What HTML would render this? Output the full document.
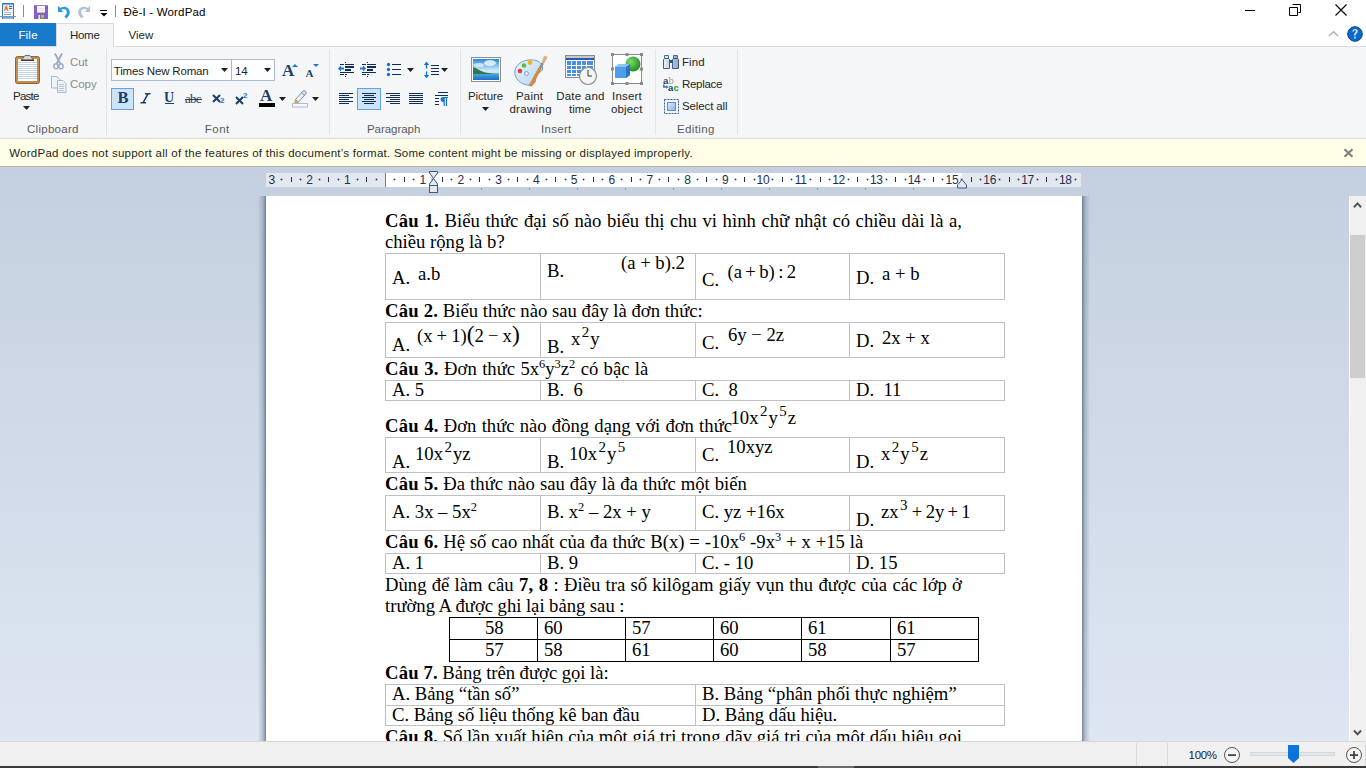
<!DOCTYPE html>
<html><head><meta charset="utf-8">
<style>
*{margin:0;padding:0;box-sizing:border-box}
html,body{width:1366px;height:768px;overflow:hidden;background:#fff;font-family:"Liberation Sans",sans-serif;font-size:12px;color:#000}
.a{position:absolute;white-space:nowrap}
#titlebar{position:absolute;left:0;top:0;width:1366px;height:23px;background:#fff}
#tabs{position:absolute;left:0;top:23px;width:1366px;height:24px;background:#fff;border-bottom:1px solid #dadbdc}
#ribbon{position:absolute;left:0;top:47px;width:1366px;height:92px;background:#f5f6f7;border-bottom:1px solid #dadbdc}
#notif{position:absolute;left:0;top:139px;width:1366px;height:28px;background:#fffee6;border-bottom:1px solid #b4b4b4}
#docarea{position:absolute;left:0;top:167px;width:1366px;height:574px;background:linear-gradient(#c4cfdf,#dee6f2)}
#page{position:absolute;left:266px;top:196px;width:816px;height:545px;background:#fff}
#vscroll{position:absolute;left:1349px;top:196px;width:17px;height:545px;background:#f0f0f0;border-left:1px solid #fff}
#rulertop{position:absolute;left:1349px;top:166px;width:17px;height:30px;background:#c4cfdf}
#status{position:absolute;left:0;top:741px;width:1366px;height:25px;background:#f0f0f0;border-top:1px solid #d7d7d7}
#taskbar{position:absolute;left:0;top:766px;width:1366px;height:2px;background:#3a3a3a}
.sep{position:absolute;width:1px;background:#e2e3e4}
.glabel{position:absolute;top:123px;color:#5b5b5b;font-size:11.5px}
.doc{font-family:"Liberation Serif",serif;font-size:18.67px;color:#000}
.t{position:absolute;border:1px solid #c0c0c0}
.v{position:absolute;width:1px;background:#c0c0c0}
.h{position:absolute;height:1px;background:#c0c0c0}
.bk{background:#000}

.doc b{letter-spacing:0.2px}
.eq sup{font-size:15px !important;top:-8px !important;margin:0 1px 0 1.5px}
.doc sup{font-size:12.4px;vertical-align:0;position:relative;top:-7px}
#page{overflow:hidden}
.rn{top:173px;width:20px;text-align:center;font-size:12px;line-height:15px;color:#1e3050;letter-spacing:-0.3px}
</style></head><body>
<div id="titlebar"></div>
<div id="tabs"></div>
<div id="ribbon"></div>
<div id="notif"></div>
<div id="docarea"></div>


<!-- ===== RIBBON ===== -->
<div class="sep" style="left:106px;top:49px;height:86px"></div>
<div class="sep" style="left:329px;top:49px;height:86px"></div>
<div class="sep" style="left:460px;top:49px;height:86px"></div>
<div class="sep" style="left:655px;top:49px;height:86px"></div>
<div class="sep" style="left:737px;top:49px;height:86px"></div>
<div class="glabel" style="left:27.00px;letter-spacing:0.275px">Clipboard</div>
<div class="glabel" style="left:204.80px;letter-spacing:0.467px">Font</div>
<div class="glabel" style="left:367.00px;letter-spacing:-0.050px">Paragraph</div>
<div class="glabel" style="left:541.00px;letter-spacing:0.300px">Insert</div>
<div class="glabel" style="left:677.00px;letter-spacing:0.367px">Editing</div>
<!-- clipboard -->
<svg class="a" style="left:14px;top:53px" width="27" height="32" viewBox="0 0 27 32">
 <rect x="1.5" y="3.5" width="24" height="27" rx="2" fill="#c08d4d" stroke="#8f6531"/>
 <rect x="4" y="6" width="19" height="22" fill="#fff"/>
 <g fill="#c3d3e3"><rect x="4" y="9" width="19" height="1"/><rect x="4" y="11" width="19" height="1"/><rect x="4" y="13" width="19" height="1"/><rect x="4" y="15" width="19" height="1"/><rect x="4" y="17" width="19" height="1"/><rect x="4" y="19" width="19" height="1"/><rect x="4" y="21" width="19" height="1"/><rect x="4" y="23" width="19" height="1"/><rect x="4" y="25" width="19" height="1"/></g>
 <path d="M7 7.5l4-5h5l4 5z" fill="#d8d8d8" stroke="#555" stroke-width="0.8"/>
 <rect x="7" y="6.5" width="13" height="1.5" fill="#3a3a3a"/>
</svg>
<div class="a" style="left:13.00px;top:89px;font-size:11.5px;line-height:15px;color:#262626;letter-spacing:-0.750px">Paste</div>
<svg class="a" style="left:23px;top:106px" width="7" height="4"><path d="M0 0h7L3.5 4z" fill="#262626"/></svg>
<svg class="a" style="left:53px;top:53px" width="11" height="17" viewBox="0 0 11 17">
 <path d="M2 0.5l5.2 10M9 0.5l-5.2 10" stroke="#9aabc3" stroke-width="1.9"/>
 <ellipse cx="3" cy="13.3" rx="2.1" ry="2.6" fill="none" stroke="#9aabc3" stroke-width="1.4"/>
 <ellipse cx="8" cy="13.3" rx="2.1" ry="2.6" fill="none" stroke="#9aabc3" stroke-width="1.4"/>
</svg>
<div class="a" style="left:70.00px;top:55px;font-size:11.5px;line-height:15px;color:#8b8b8b;letter-spacing:-0.100px">Cut</div>
<svg class="a" style="left:51px;top:76px" width="17" height="17" viewBox="0 0 17 17">
 <path d="M0.5 0.5h5.5l3 3v8.5h-8.5z" fill="#eef3f9" stroke="#a8b8cf"/>
 <path d="M6.5 4.5h5.5l3 3v9h-8.5z" fill="#eef3f9" stroke="#a8b8cf"/>
 <g fill="#a8b8cf"><rect x="8" y="8" width="5" height="0.8"/><rect x="8" y="10" width="5" height="0.8"/><rect x="8" y="12" width="5" height="0.8"/><rect x="8" y="14" width="5" height="0.8"/></g>
</svg>
<div class="a" style="left:70.00px;top:77px;font-size:11.5px;line-height:15px;color:#8b8b8b;letter-spacing:-0.067px">Copy</div>
<!-- font -->
<div class="a" style="left:111px;top:59px;width:121px;height:22px;background:#fdfeff;border:1px solid #a8bbd6"></div>
<div class="a" style="left:231px;top:59px;width:44px;height:22px;background:#fdfeff;border:1px solid #a8bbd6"></div>
<div class="a" style="left:113.80px;top:64px;font-size:11.5px;line-height:15px;color:#1e1e1e;letter-spacing:-0.178px">Times New Roman</div>
<svg class="a" style="left:221px;top:68px" width="7" height="4"><path d="M0 0h7L3.5 4z" fill="#1e1e1e"/></svg>
<div class="a" style="left:235px;top:64px;font-size:11.5px;line-height:15px;color:#1e1e1e;letter-spacing:-0.2px">14</div>
<svg class="a" style="left:264px;top:68px" width="7" height="4"><path d="M0 0h7L3.5 4z" fill="#1e1e1e"/></svg>
<div class="a" style="left:282px;top:61px;font-family:'Liberation Serif';font-weight:bold;font-size:17px;line-height:19px;color:#1e3f66">A</div>
<svg class="a" style="left:292px;top:63.5px" width="6" height="3"><path d="M0 3h6L3 0z" fill="#1a73d9"/></svg>
<div class="a" style="left:305.5px;top:67px;font-family:'Liberation Serif';font-weight:bold;font-size:11px;line-height:12px;color:#1e3f66">A</div>
<svg class="a" style="left:313px;top:64px" width="6" height="3"><path d="M0 0h6L3 3z" fill="#1a73d9"/></svg>
<div class="a" style="left:111px;top:88px;width:23px;height:22px;background:#cce4f7;border:1px solid #62a2e4"></div>
<div class="a" style="left:117.5px;top:89px;font-family:'Liberation Serif';font-weight:bold;font-size:16.5px;line-height:17px;color:#1e3f66">B</div>
<svg class="a" style="left:140px;top:93px" width="11" height="11" viewBox="0 0 11 11"><path d="M5 0.8h5.5M0.5 9.8h5.5M8 0.8L3 9.8" stroke="#1e3f66" stroke-width="1.5" fill="none"/></svg>
<div class="a" style="left:164px;top:90px;font-family:'Liberation Serif';font-weight:bold;font-size:14px;line-height:16px;color:#1e3f66">U</div>
<div class="a" style="left:165px;top:103px;width:9px;height:1px;background:#1e3f66"></div>
<div class="a" style="left:185px;top:91px;font-family:'Liberation Serif';font-size:13px;line-height:15px;color:#1e3f66;letter-spacing:-0.8px">abc</div>
<div class="a" style="left:185px;top:99px;width:17px;height:1px;background:#1e3f66"></div>
<svg class="a" style="left:212px;top:94px" width="9" height="9" viewBox="0 0 9 9"><path d="M1 1l7 7M8 1L1 8" stroke="#1e3f66" stroke-width="2.1"/></svg>
<div class="a" style="left:220px;top:96.5px;font-weight:bold;font-size:8px;line-height:8px;color:#1a73d9">2</div>
<svg class="a" style="left:235px;top:96px" width="9" height="9" viewBox="0 0 9 9"><path d="M1 1l7 7M8 1L1 8" stroke="#1e3f66" stroke-width="2.1"/></svg>
<div class="a" style="left:243px;top:91.5px;font-weight:bold;font-size:8px;line-height:8px;color:#1a73d9">2</div>
<div class="a" style="left:260px;top:86px;font-family:'Liberation Serif';font-weight:bold;font-size:17px;line-height:19px;color:#1e3f66">A</div>
<div class="a" style="left:259px;top:103px;width:16px;height:4px;background:#000"></div>
<svg class="a" style="left:279px;top:97px" width="7" height="4"><path d="M0 0h7L3.5 4z" fill="#1e1e1e"/></svg>
<svg class="a" style="left:292px;top:89px" width="17" height="19" viewBox="0 0 17 19">
 <defs><linearGradient id="hlg" x1="0" y1="0" x2="1" y2="0"><stop offset="0" stop-color="#ffffff"/><stop offset="1" stop-color="#c9d6ea"/></linearGradient></defs>
 <path d="M3.5 10.5L10.8 2.2a2 2 0 0 1 3 2.6L6.5 13.2z" fill="url(#hlg)" stroke="#7386a8" stroke-width="0.9"/>
 <path d="M9.5 3.7l3 2.6" stroke="#7386a8" stroke-width="0.8"/>
 <path d="M3.5 10.5l3 2.7-4.2 1.3z" fill="#e9b43c" stroke="#9c7a2a" stroke-width="0.5"/>
 <rect x="0.5" y="14.5" width="15" height="3.5" fill="#f7f9fc" stroke="#a9bbd8"/>
</svg>
<svg class="a" style="left:312px;top:97px" width="7" height="4"><path d="M0 0h7L3.5 4z" fill="#1e1e1e"/></svg>

<!-- paragraph -->
<svg class="a" style="left:338px;top:62px" width="17" height="17" viewBox="0 0 17 17">
 <g fill="#0f2d57"><rect x="2" y="2" width="4" height="1"/><rect x="7" y="2" width="9" height="1"/><rect x="7" y="4" width="9" height="2"/><rect x="7" y="7" width="6" height="2"/><rect x="2" y="10" width="14" height="1"/><rect x="2" y="12" width="4" height="1"/><rect x="7" y="12" width="2" height="1"/></g>
 <g fill="#0f2d57"><rect x="7" y="0" width="1" height="1"/><rect x="7" y="14" width="1" height="1"/></g>
 <path d="M0 6.5l3-3v2h3v2h-3v2z" fill="#1a73d9"/>
</svg>
<svg class="a" style="left:360px;top:62px" width="17" height="17" viewBox="0 0 17 17">
 <g fill="#0f2d57"><rect x="2" y="2" width="4" height="1"/><rect x="7" y="2" width="9" height="1"/><rect x="7" y="4" width="9" height="2"/><rect x="7" y="7" width="6" height="2"/><rect x="2" y="10" width="14" height="1"/><rect x="2" y="12" width="4" height="1"/><rect x="7" y="12" width="2" height="1"/></g>
 <g fill="#0f2d57"><rect x="7" y="0" width="1" height="1"/><rect x="7" y="14" width="1" height="1"/></g>
 <path d="M6 6.5l-3-3v2h-3v2h3v2z" fill="#1a73d9"/>
</svg>
<svg class="a" style="left:386px;top:62px" width="16" height="15" viewBox="0 0 16 15">
 <g fill="#1a73d9"><circle cx="2.5" cy="2.5" r="1.7"/><circle cx="2.5" cy="7.5" r="1.7"/><circle cx="2.5" cy="12.5" r="1.7"/></g>
 <g fill="#0f2d57"><rect x="6" y="2" width="9" height="1"/><rect x="6" y="7" width="9" height="1"/><rect x="6" y="12" width="9" height="1"/></g>
</svg>
<svg class="a" style="left:407px;top:68px" width="7" height="4"><path d="M0 0h7L3.5 4z" fill="#1e1e1e"/></svg>
<svg class="a" style="left:423px;top:61px" width="17" height="18" viewBox="0 0 17 18">
 <path d="M3.5 0.5L0.8 4h2v3.5h1.4V4h2z M3.5 17.5L0.8 14h2v-3.5h1.4V14h2z" fill="#1a73d9"/>
 <g fill="#0f2d57"><rect x="8" y="4" width="8" height="1"/><rect x="8" y="7" width="8" height="1"/><rect x="8" y="10" width="8" height="1"/><rect x="8" y="13" width="8" height="1"/></g>
</svg>
<svg class="a" style="left:441px;top:68px" width="7" height="4"><path d="M0 0h7L3.5 4z" fill="#1e1e1e"/></svg>
<svg class="a" style="left:339px;top:93px" width="14" height="11" viewBox="0 0 14 11"><g fill="#0f2d57"><rect x="0" y="0" width="14" height="1"/><rect x="0" y="2" width="10" height="1"/><rect x="0" y="4" width="14" height="1"/><rect x="0" y="6" width="10" height="1"/><rect x="0" y="8" width="14" height="1"/><rect x="0" y="10" width="10" height="1"/></g></svg>
<div class="a" style="left:357px;top:88px;width:24px;height:22px;background:#cce4f7;border:1px solid #62a2e4"></div>
<svg class="a" style="left:362px;top:93px" width="14" height="11" viewBox="0 0 14 11"><g fill="#0f2d57"><rect x="0" y="0" width="14" height="1"/><rect x="2" y="2" width="10" height="1"/><rect x="0" y="4" width="14" height="1"/><rect x="2" y="6" width="10" height="1"/><rect x="0" y="8" width="14" height="1"/><rect x="2" y="10" width="10" height="1"/></g></svg>
<svg class="a" style="left:386px;top:93px" width="14" height="11" viewBox="0 0 14 11"><g fill="#0f2d57"><rect x="0" y="0" width="14" height="1"/><rect x="4" y="2" width="10" height="1"/><rect x="0" y="4" width="14" height="1"/><rect x="4" y="6" width="10" height="1"/><rect x="0" y="8" width="14" height="1"/><rect x="4" y="10" width="10" height="1"/></g></svg>
<svg class="a" style="left:409px;top:93px" width="14" height="11" viewBox="0 0 14 11"><g fill="#0f2d57"><rect x="0" y="0" width="14" height="1"/><rect x="0" y="2" width="14" height="1"/><rect x="0" y="4" width="14" height="1"/><rect x="0" y="6" width="14" height="1"/><rect x="0" y="8" width="14" height="1"/><rect x="0" y="10" width="14" height="1"/></g></svg>
<svg class="a" style="left:434px;top:92px" width="16" height="15" viewBox="0 0 16 15">
 <g fill="#0f2d57"><rect x="4" y="0" width="10" height="1"/><rect x="1" y="3" width="13" height="1"/><rect x="1" y="6" width="4" height="1"/><rect x="1" y="9" width="4" height="1"/><rect x="1" y="12" width="4" height="1"/></g>
 <path d="M8.5 5h5.5v1h-1v8h-1.2V6h-1v8H9.6V9.8a2.4 2.4 0 0 1-1.1-4.8z" fill="#1a73d9"/>
</svg>
<!-- insert -->
<svg class="a" style="left:471px;top:57px" width="31" height="26" viewBox="0 0 31 26">
 <defs><linearGradient id="sky" x1="0" y1="0" x2="0" y2="1"><stop offset="0" stop-color="#2d86d8"/><stop offset="0.55" stop-color="#cfe9f8"/><stop offset="1" stop-color="#b9def3"/></linearGradient>
 <linearGradient id="wat" x1="0" y1="0" x2="0" y2="1"><stop offset="0" stop-color="#4aa3e0"/><stop offset="1" stop-color="#1d6fc2"/></linearGradient></defs>
 <rect x="0.5" y="0.5" width="29" height="24" fill="#fff" stroke="#8f8f8f"/>
 <rect x="2" y="2" width="26" height="21" fill="url(#sky)"/>
 <ellipse cx="19" cy="6" rx="6" ry="3" fill="#eaf6fd" opacity="0.85"/><ellipse cx="8" cy="8" rx="5" ry="2" fill="#eaf6fd" opacity="0.7"/>
 <path d="M2 10.5c3 0 5 2 8 3.5 4 2 10 2.5 18 2.5V18H2z" fill="#2f7a4a"/>
 <rect x="2" y="17" width="26" height="6" fill="url(#wat)"/>
</svg>
<div class="a" style="left:468.00px;top:89px;font-size:11.5px;line-height:15px;color:#262626;letter-spacing:-0.117px">Picture</div>
<svg class="a" style="left:482px;top:107px" width="7" height="4"><path d="M0 0h7L3.5 4z" fill="#1e1e1e"/></svg>
<svg class="a" style="left:513px;top:54px" width="35" height="33" viewBox="0 0 35 33">
 <defs><linearGradient id="palg" x1="0" y1="0" x2="1" y2="1"><stop offset="0" stop-color="#e8f3fc"/><stop offset="1" stop-color="#b6d5ee"/></linearGradient></defs>
 <path d="M2.5 22c-3-7 3-15 13-16 9-1 15 3 14 9-1 4-5 3-7 6-2 4 2 6-2 9-5 3-15 0-18-8z" fill="url(#palg)" stroke="#5f9cc9" stroke-width="0.9"/>
 <circle cx="7" cy="17" r="2.3" fill="#e33b3b"/><circle cx="11" cy="11.5" r="2.3" fill="#5cbf3f"/><circle cx="17" cy="8.5" r="2.4" fill="#f4b321"/>
 <circle cx="13.5" cy="19.5" r="1.9" fill="#fff" stroke="#5f9cc9" stroke-width="1"/>
 <path d="M16.2 31.5L26 13.5l2.2 1.1-9.4 17.6z" fill="#e98a2a" stroke="#b8621a" stroke-width="0.5"/>
 <path d="M26 13.5l2.6-5 2.3 1.2-2.7 4.9z" fill="#8c8c8c"/>
 <path d="M28.6 8.5l2.5-6.5c1.2-.6 2.8.4 3.4 1.4l-3.6 6.3z" fill="#d7b07a"/>
</svg>
<div class="a" style="left:516.00px;top:89px;font-size:11.5px;line-height:15px;color:#262626;letter-spacing:0.200px">Paint</div>
<div class="a" style="left:509.40px;top:102px;font-size:11.5px;line-height:15px;color:#262626;letter-spacing:0.317px">drawing</div>
<svg class="a" style="left:564px;top:54px" width="34" height="32" viewBox="0 0 34 32">
 <rect x="1.5" y="1.5" width="29" height="22" fill="#fff" stroke="#8a8a8a"/>
 <rect x="2" y="2" width="28" height="3" fill="#c8c8c8"/>
 <rect x="2" y="4" width="28" height="2" fill="#2a5ba8"/>
 <g fill="#4a90e2"><rect x="3" y="7" width="26" height="15"/></g>
 <g fill="#fff"><rect x="7" y="7" width="1" height="15"/><rect x="12" y="7" width="1" height="15"/><rect x="17" y="7" width="1" height="15"/><rect x="22" y="7" width="1" height="15"/><rect x="3" y="11" width="26" height="1"/><rect x="3" y="15" width="26" height="1"/><rect x="3" y="19" width="26" height="1"/></g>
 <circle cx="24" cy="22" r="8.5" fill="#f4f4f4" stroke="#8d8d8d" stroke-width="1.2"/>
 <path d="M24 16v6h4" fill="none" stroke="#333" stroke-width="1"/>
</svg>
<div class="a" style="left:556.20px;top:89px;font-size:11.5px;line-height:15px;color:#262626;letter-spacing:0.228px">Date and</div>
<div class="a" style="left:569.00px;top:102px;font-size:11.5px;line-height:15px;color:#262626;letter-spacing:0.017px">time</div>
<svg class="a" style="left:611px;top:53px" width="33" height="33" viewBox="0 0 33 33">
 <rect x="1.5" y="1.5" width="29" height="29" fill="#fff" stroke="#8a8a8a"/>
 <g fill="#8a8a8a"><rect x="0" y="0" width="3" height="3"/><rect x="14.5" y="0" width="3" height="3"/><rect x="29" y="0" width="3" height="3"/><rect x="0" y="14.5" width="3" height="3"/><rect x="29" y="14.5" width="3" height="3"/><rect x="0" y="29" width="3" height="3"/><rect x="14.5" y="29" width="3" height="3"/><rect x="29" y="29" width="3" height="3"/></g>
 <defs><radialGradient id="gsph" cx="0.35" cy="0.35" r="0.7"><stop offset="0" stop-color="#7fdc6a"/><stop offset="1" stop-color="#1f8a24"/></radialGradient></defs>
 <circle cx="22" cy="11" r="7.5" fill="url(#gsph)"/>
 <path d="M4 14l4-3h11v11l-4 3H4z" fill="#4f9ce8"/>
 <path d="M4 14l4-3h11l-4 3z" fill="#8cc2f5"/><path d="M15 14l4-3v11l-4 3z" fill="#2f74c4"/>
</svg>
<div class="a" style="left:612.00px;top:89px;font-size:11.5px;line-height:15px;color:#262626;letter-spacing:0.200px">Insert</div>
<div class="a" style="left:611.00px;top:102px;font-size:11.5px;line-height:15px;color:#262626;letter-spacing:0.150px">object</div>
<!-- editing -->
<svg class="a" style="left:663px;top:55px" width="16" height="14" viewBox="0 0 16 14">
 <defs><linearGradient id="bing" x1="0" y1="0" x2="1" y2="0"><stop offset="0" stop-color="#e9f0f8"/><stop offset="1" stop-color="#8fa7c6"/></linearGradient></defs>
 <path d="M1.5 0.5h4v3h-4z M10.5 0.5h4v3h-4z" fill="url(#bing)" stroke="#3f5f8c" stroke-width="0.9"/>
 <path d="M0.5 4.5l1-1h4l1 1v9h-6z M9.5 4.5l1-1h4l1 1v9h-6z" fill="url(#bing)" stroke="#2f4f7c" stroke-width="0.9"/>
 <rect x="6.5" y="5" width="3" height="3" fill="#2f4f7c"/>
</svg>
<div class="a" style="left:682px;top:55px;font-size:11.5px;line-height:15px;color:#262626;letter-spacing:0.1px">Find</div>
<svg class="a" style="left:662px;top:76px" width="19" height="15" viewBox="0 0 19 15">
 <text x="1" y="7.5" font-family="Liberation Sans" font-weight="bold" font-size="9.5" fill="#1e3f66">a</text>
 <text x="6.5" y="7.5" font-family="Liberation Serif" font-size="10.5" fill="#9a9a9a">b</text>
 <text x="6" y="14.5" font-family="Liberation Sans" font-weight="bold" font-size="9.5" fill="#1e3f66">a</text>
 <text x="11.5" y="14.5" font-family="Liberation Sans" font-weight="bold" font-size="9.5" fill="#2a9a2a">c</text>
 <path d="M1.8 8.5v2.5h3" fill="none" stroke="#1a73d9" stroke-width="1.4"/><path d="M4.3 9.2l2.3 1.8-2.3 1.8z" fill="#1a73d9"/>
</svg>
<div class="a" style="left:682.00px;top:77px;font-size:11.5px;line-height:15px;color:#262626;letter-spacing:-0.300px">Replace</div>
<svg class="a" style="left:664px;top:99px" width="15" height="15" viewBox="0 0 15 15">
 <rect x="0.5" y="0.5" width="14" height="14" fill="none" stroke="#2f5f9a" stroke-dasharray="2 1"/>
 <defs><linearGradient id="selg" x1="0" y1="0" x2="1" y2="1"><stop offset="0" stop-color="#e4f0fc"/><stop offset="1" stop-color="#7fb2e8"/></linearGradient></defs>
 <rect x="3.5" y="3.5" width="8" height="8" fill="url(#selg)" stroke="#5b8fcf"/>
</svg>
<div class="a" style="left:682.00px;top:99px;font-size:11.5px;line-height:15px;color:#262626;letter-spacing:-0.117px">Select all</div>
<!-- notification -->
<div class="a" style="left:9.20px;top:146px;font-size:11.5px;line-height:15px;color:#1e1e1e;letter-spacing:0.262px">WordPad does not support all of the features of this document’s format. Some content might be missing or displayed improperly.</div>
<svg class="a" style="left:1343px;top:148px" width="12" height="10" viewBox="0 0 12 10"><path d="M1.5 1.2l8 7.6M9.5 1.2l-8 7.6" stroke="#7d7d7d" stroke-width="2"/></svg>
<!-- title bar -->
<svg class="a" style="left:0;top:3px" width="17" height="17" viewBox="0 0 17 17">
 <defs><linearGradient id="appg" x1="0" y1="0" x2="0" y2="1"><stop offset="0" stop-color="#d2e4f6"/><stop offset="1" stop-color="#ffffff"/></linearGradient></defs>
 <rect x="2" y="0" width="12" height="14" fill="#3f77b0"/>
 <rect x="3" y="1.5" width="10" height="12" fill="url(#appg)"/>
 <path d="M4 8l1.6-5h1.3L8.5 8H7.4l-.4-1.2H5.5L5.1 8z" fill="#f27b1e"/>
 <rect x="9" y="3" width="3" height="1" fill="#3566c9"/><rect x="9" y="5" width="3" height="1" fill="#3566c9"/>
 <rect x="4" y="9" width="7" height="1" fill="#b5bfcc"/><rect x="4" y="11" width="7" height="1" fill="#8f9bac"/>
 <rect x="0" y="13" width="16" height="1" fill="#6b9acb"/>
 <rect x="2" y="14" width="12" height="2" fill="#4a82bd"/>
 <rect x="3" y="14.6" width="10" height="0.9" fill="#dbe7f3"/>
</svg>
<div class="a" style="left:23px;top:5px;width:1px;height:12px;background:#8c8c8c"></div>
<svg class="a" style="left:34px;top:5px" width="14" height="14" viewBox="0 0 14 14">
 <rect x="0" y="0" width="14" height="14" rx="0.5" fill="#8a5cc8"/>
 <rect x="0" y="0" width="14" height="1" fill="#a57de0"/>
 <rect x="3" y="1" width="8" height="6.5" fill="#fbfbfb"/>
 <rect x="4" y="3" width="6" height="0.6" fill="#c9d3e2"/><rect x="4" y="5" width="6" height="0.6" fill="#c9d3e2"/>
 <rect x="3.5" y="9.5" width="7" height="4.5" fill="#7b7b7b"/>
 <rect x="4.5" y="10" width="1.5" height="4" fill="#e8e8e8"/>
 <rect x="7" y="10" width="3" height="3" fill="#a9a9a9"/>
</svg>
<svg class="a" style="left:56px;top:4px" width="15" height="16" viewBox="0 0 15 16">
 <path d="M2 2v6h5.5l-2.3-2.1c2.6-1.8 5.6-.5 5.6 2.3 0 1.3-.7 2.4-2.5 4.2l2.1 2.1c2.3-2.2 3.4-3.9 3.4-6.3 0-4.6-5.6-7-9.4-4.1L2 2z" fill="#2b9be6"/>
</svg>
<svg class="a" style="left:77px;top:4px" width="15" height="16" viewBox="0 0 15 16">
 <path d="M13 2v6H7.5l2.3-2.1C7.2 4.1 4.2 5.4 4.2 8.2c0 1.3.7 2.4 2.5 4.2l-2.1 2.1C2.3 12.3 1.2 10.6 1.2 8.2c0-4.6 5.6-7 9.4-4.1L13 2z" fill="#b4c2d6"/>
</svg>
<div class="a" style="left:100px;top:10px;width:7px;height:1px;background:#000"></div>
<svg class="a" style="left:100px;top:13px" width="8" height="4"><path d="M0.5 0h7L4 3.5z" fill="#000"/></svg>
<div class="a" style="left:115px;top:5px;width:1px;height:12px;background:#8c8c8c"></div>
<div class="a" style="left:123.40px;top:5px;font-size:11.5px;line-height:15px;color:#000;letter-spacing:0.188px">Đề-I - WordPad</div>
<!-- window controls -->
<div class="a" style="left:1245px;top:10px;width:10px;height:1px;background:#000"></div>
<svg class="a" style="left:1289px;top:4px" width="12" height="12" viewBox="0 0 12 12"><path d="M3.5 0.5h8v8h-2M0.5 3.5h8v8h-8z" fill="none" stroke="#000"/></svg>
<svg class="a" style="left:1335px;top:4px" width="12" height="12" viewBox="0 0 12 12"><path d="M0.5 0.5l11 11M11.5 0.5l-11 11" stroke="#000" stroke-width="1.1"/></svg>
<!-- tabs -->
<div class="a" style="left:0;top:23px;width:56px;height:23px;background:#1979ca"></div>
<div class="a" style="left:18.40px;top:28px;font-size:11.5px;line-height:15px;color:#fff;letter-spacing:0.201px">File</div>
<div class="a" style="left:56px;top:23px;width:58px;height:24px;background:#f5f6f7;border:1px solid #dadbdc;border-bottom:none"></div>
<div class="a" style="left:70.00px;top:28px;font-size:11.5px;line-height:15px;color:#262626;letter-spacing:-0.299px">Home</div>
<div class="a" style="left:128.60px;top:28px;font-size:11.5px;line-height:15px;color:#262626;letter-spacing:-0.032px">View</div>
<svg class="a" style="left:1328px;top:30px" width="11" height="7" viewBox="0 0 11 7"><path d="M1 6l4.5-4.5L10 6" fill="none" stroke="#a8a8a8" stroke-width="1.2"/></svg>
<svg class="a" style="left:1346px;top:25px" width="18" height="18" viewBox="0 0 18 18"><circle cx="9" cy="9" r="7.3" fill="#0b6ad0" stroke="#0a3f85" stroke-width="1"/><path d="M6.4 6.6c0-1.7 1.2-2.6 2.7-2.6 1.6 0 2.7 1 2.7 2.3 0 1.9-2.2 2.2-2.2 3.9v.4H8v-.6c0-2 2-2.4 2-3.7 0-.6-.4-1-1-1-.7 0-1 .5-1.1 1.3z M8 11.8h1.7v1.7H8z" fill="#dbe9f8"/></svg>


<div class="a" style="left:258px;top:196px;width:8px;height:545px;background:linear-gradient(90deg,rgba(110,125,150,0),rgba(110,125,150,0.42) 65%,rgba(90,105,130,0.8))"></div>
<div class="a" style="left:1082px;top:196px;width:8px;height:545px;background:linear-gradient(270deg,rgba(110,125,150,0),rgba(110,125,150,0.42) 65%,rgba(90,105,130,0.8))"></div>
<div id="page"></div><div class="a" style="left:266px;top:173px;width:815px;height:14px;background:#e3e7ee"></div>
<div class="a" style="left:386px;top:173px;width:576px;height:14px;background:#fff"></div>
<div class="a" style="left:385px;top:173px;width:1px;height:14px;background:#6d7d96"></div>
<div class="a rn" style="left:261.62px">3</div>
<div class="a" style="left:281px;top:179px;width:1px;height:1px;background:#1e3050;box-shadow:0 0 0 0.3px #1e3050"></div>
<div class="a" style="left:291px;top:177px;width:1px;height:5px;background:#1e3050"></div>
<div class="a" style="left:300px;top:179px;width:1px;height:1px;background:#1e3050;box-shadow:0 0 0 0.3px #1e3050"></div>
<div class="a rn" style="left:299.41px">2</div>
<div class="a" style="left:319px;top:179px;width:1px;height:1px;background:#1e3050;box-shadow:0 0 0 0.3px #1e3050"></div>
<div class="a" style="left:328px;top:177px;width:1px;height:5px;background:#1e3050"></div>
<div class="a" style="left:338px;top:179px;width:1px;height:1px;background:#1e3050;box-shadow:0 0 0 0.3px #1e3050"></div>
<div class="a rn" style="left:337.20px">1</div>
<div class="a" style="left:357px;top:179px;width:1px;height:1px;background:#1e3050;box-shadow:0 0 0 0.3px #1e3050"></div>
<div class="a" style="left:366px;top:177px;width:1px;height:5px;background:#1e3050"></div>
<div class="a" style="left:376px;top:179px;width:1px;height:1px;background:#1e3050;box-shadow:0 0 0 0.3px #1e3050"></div>
<div class="a" style="left:394px;top:179px;width:1px;height:1px;background:#1e3050;box-shadow:0 0 0 0.3px #1e3050"></div>
<div class="a" style="left:404px;top:177px;width:1px;height:5px;background:#1e3050"></div>
<div class="a" style="left:413px;top:179px;width:1px;height:1px;background:#1e3050;box-shadow:0 0 0 0.3px #1e3050"></div>
<div class="a rn" style="left:412.80px">1</div>
<div class="a" style="left:432px;top:179px;width:1px;height:1px;background:#1e3050;box-shadow:0 0 0 0.3px #1e3050"></div>
<div class="a" style="left:442px;top:177px;width:1px;height:5px;background:#1e3050"></div>
<div class="a" style="left:451px;top:179px;width:1px;height:1px;background:#1e3050;box-shadow:0 0 0 0.3px #1e3050"></div>
<div class="a rn" style="left:450.59px">2</div>
<div class="a" style="left:470px;top:179px;width:1px;height:1px;background:#1e3050;box-shadow:0 0 0 0.3px #1e3050"></div>
<div class="a" style="left:479px;top:177px;width:1px;height:5px;background:#1e3050"></div>
<div class="a" style="left:489px;top:179px;width:1px;height:1px;background:#1e3050;box-shadow:0 0 0 0.3px #1e3050"></div>
<div class="a rn" style="left:488.38px">3</div>
<div class="a" style="left:508px;top:179px;width:1px;height:1px;background:#1e3050;box-shadow:0 0 0 0.3px #1e3050"></div>
<div class="a" style="left:517px;top:177px;width:1px;height:5px;background:#1e3050"></div>
<div class="a" style="left:527px;top:179px;width:1px;height:1px;background:#1e3050;box-shadow:0 0 0 0.3px #1e3050"></div>
<div class="a rn" style="left:526.18px">4</div>
<div class="a" style="left:546px;top:179px;width:1px;height:1px;background:#1e3050;box-shadow:0 0 0 0.3px #1e3050"></div>
<div class="a" style="left:555px;top:177px;width:1px;height:5px;background:#1e3050"></div>
<div class="a" style="left:565px;top:179px;width:1px;height:1px;background:#1e3050;box-shadow:0 0 0 0.3px #1e3050"></div>
<div class="a rn" style="left:563.98px">5</div>
<div class="a" style="left:583px;top:179px;width:1px;height:1px;background:#1e3050;box-shadow:0 0 0 0.3px #1e3050"></div>
<div class="a" style="left:593px;top:177px;width:1px;height:5px;background:#1e3050"></div>
<div class="a" style="left:602px;top:179px;width:1px;height:1px;background:#1e3050;box-shadow:0 0 0 0.3px #1e3050"></div>
<div class="a rn" style="left:601.77px">6</div>
<div class="a" style="left:621px;top:179px;width:1px;height:1px;background:#1e3050;box-shadow:0 0 0 0.3px #1e3050"></div>
<div class="a" style="left:631px;top:177px;width:1px;height:5px;background:#1e3050"></div>
<div class="a" style="left:640px;top:179px;width:1px;height:1px;background:#1e3050;box-shadow:0 0 0 0.3px #1e3050"></div>
<div class="a rn" style="left:639.57px">7</div>
<div class="a" style="left:659px;top:179px;width:1px;height:1px;background:#1e3050;box-shadow:0 0 0 0.3px #1e3050"></div>
<div class="a" style="left:668px;top:177px;width:1px;height:5px;background:#1e3050"></div>
<div class="a" style="left:678px;top:179px;width:1px;height:1px;background:#1e3050;box-shadow:0 0 0 0.3px #1e3050"></div>
<div class="a rn" style="left:677.36px">8</div>
<div class="a" style="left:697px;top:179px;width:1px;height:1px;background:#1e3050;box-shadow:0 0 0 0.3px #1e3050"></div>
<div class="a" style="left:706px;top:177px;width:1px;height:5px;background:#1e3050"></div>
<div class="a" style="left:716px;top:179px;width:1px;height:1px;background:#1e3050;box-shadow:0 0 0 0.3px #1e3050"></div>
<div class="a rn" style="left:715.15px">9</div>
<div class="a" style="left:735px;top:179px;width:1px;height:1px;background:#1e3050;box-shadow:0 0 0 0.3px #1e3050"></div>
<div class="a" style="left:744px;top:177px;width:1px;height:5px;background:#1e3050"></div>
<div class="a" style="left:754px;top:179px;width:1px;height:1px;background:#1e3050;box-shadow:0 0 0 0.3px #1e3050"></div>
<div class="a rn" style="left:752.95px">10</div>
<div class="a" style="left:772px;top:179px;width:1px;height:1px;background:#1e3050;box-shadow:0 0 0 0.3px #1e3050"></div>
<div class="a" style="left:782px;top:177px;width:1px;height:5px;background:#1e3050"></div>
<div class="a" style="left:791px;top:179px;width:1px;height:1px;background:#1e3050;box-shadow:0 0 0 0.3px #1e3050"></div>
<div class="a rn" style="left:790.75px">11</div>
<div class="a" style="left:810px;top:179px;width:1px;height:1px;background:#1e3050;box-shadow:0 0 0 0.3px #1e3050"></div>
<div class="a" style="left:820px;top:177px;width:1px;height:5px;background:#1e3050"></div>
<div class="a" style="left:829px;top:179px;width:1px;height:1px;background:#1e3050;box-shadow:0 0 0 0.3px #1e3050"></div>
<div class="a rn" style="left:828.54px">12</div>
<div class="a" style="left:848px;top:179px;width:1px;height:1px;background:#1e3050;box-shadow:0 0 0 0.3px #1e3050"></div>
<div class="a" style="left:857px;top:177px;width:1px;height:5px;background:#1e3050"></div>
<div class="a" style="left:867px;top:179px;width:1px;height:1px;background:#1e3050;box-shadow:0 0 0 0.3px #1e3050"></div>
<div class="a rn" style="left:866.34px">13</div>
<div class="a" style="left:886px;top:179px;width:1px;height:1px;background:#1e3050;box-shadow:0 0 0 0.3px #1e3050"></div>
<div class="a" style="left:895px;top:177px;width:1px;height:5px;background:#1e3050"></div>
<div class="a" style="left:905px;top:179px;width:1px;height:1px;background:#1e3050;box-shadow:0 0 0 0.3px #1e3050"></div>
<div class="a rn" style="left:904.13px">14</div>
<div class="a" style="left:924px;top:179px;width:1px;height:1px;background:#1e3050;box-shadow:0 0 0 0.3px #1e3050"></div>
<div class="a" style="left:933px;top:177px;width:1px;height:5px;background:#1e3050"></div>
<div class="a" style="left:942px;top:179px;width:1px;height:1px;background:#1e3050;box-shadow:0 0 0 0.3px #1e3050"></div>
<div class="a rn" style="left:941.93px">15</div>
<div class="a" style="left:961px;top:179px;width:1px;height:1px;background:#1e3050;box-shadow:0 0 0 0.3px #1e3050"></div>
<div class="a" style="left:971px;top:177px;width:1px;height:5px;background:#1e3050"></div>
<div class="a" style="left:980px;top:179px;width:1px;height:1px;background:#1e3050;box-shadow:0 0 0 0.3px #1e3050"></div>
<div class="a rn" style="left:979.72px">16</div>
<div class="a" style="left:999px;top:179px;width:1px;height:1px;background:#1e3050;box-shadow:0 0 0 0.3px #1e3050"></div>
<div class="a" style="left:1009px;top:177px;width:1px;height:5px;background:#1e3050"></div>
<div class="a" style="left:1018px;top:179px;width:1px;height:1px;background:#1e3050;box-shadow:0 0 0 0.3px #1e3050"></div>
<div class="a rn" style="left:1017.51px">17</div>
<div class="a" style="left:1037px;top:179px;width:1px;height:1px;background:#1e3050;box-shadow:0 0 0 0.3px #1e3050"></div>
<div class="a" style="left:1046px;top:177px;width:1px;height:5px;background:#1e3050"></div>
<div class="a" style="left:1056px;top:179px;width:1px;height:1px;background:#1e3050;box-shadow:0 0 0 0.3px #1e3050"></div>
<div class="a rn" style="left:1055.31px">18</div>
<div class="a" style="left:481px;top:188px;width:1px;height:2px;background:#8d9bb0"></div>
<div class="a" style="left:529px;top:188px;width:1px;height:2px;background:#8d9bb0"></div>
<div class="a" style="left:577px;top:188px;width:1px;height:2px;background:#8d9bb0"></div>
<div class="a" style="left:625px;top:188px;width:1px;height:2px;background:#8d9bb0"></div>
<div class="a" style="left:673px;top:188px;width:1px;height:2px;background:#8d9bb0"></div>
<div class="a" style="left:721px;top:188px;width:1px;height:2px;background:#8d9bb0"></div>
<div class="a" style="left:769px;top:188px;width:1px;height:2px;background:#8d9bb0"></div>
<div class="a" style="left:817px;top:188px;width:1px;height:2px;background:#8d9bb0"></div>
<div class="a" style="left:865px;top:188px;width:1px;height:2px;background:#8d9bb0"></div>
<div class="a" style="left:913px;top:188px;width:1px;height:2px;background:#8d9bb0"></div>
<div class="a" style="left:1075px;top:179px;width:1px;height:1px;background:#1e3050;box-shadow:0 0 0 0.3px #1e3050"></div>
<svg class="a" style="left:428px;top:171px" width="11" height="24" viewBox="0 0 11 24">
<path d="M1.5 0.5h8v1.5L5.5 7.5 1.5 2z" fill="#e4e8ee" stroke="#3c5a80"/>
<path d="M5.5 7.5l4 5.5v1.5h-8V13z" fill="#e4e8ee" stroke="#3c5a80"/>
<rect x="1.5" y="14.5" width="8" height="7" fill="#e4e8ee" stroke="#3c5a80"/>
</svg>
<svg class="a" style="left:956px;top:179px" width="12" height="10" viewBox="0 0 12 10">
<path d="M6 0.5l4.5 5.5v3h-9V6z" fill="#e4e8ee" stroke="#3c5a80"/>
</svg>

<div id="doc" class="doc">
<!-- line 1 justified -->
<div class="a" style="left:385px;top:210px;width:577px;line-height:21px;white-space:normal;text-align:justify;text-align-last:justify"><b>Câu 1.</b> Biểu thức đại số nào biểu thị chu vi hình chữ nhật có chiều dài là a,</div>
<div class="a" style="left:385px;top:230.7px;line-height:21px">chiều rộng là b?</div>
<!-- table 1 -->
<div class="t" style="left:385px;top:253px;width:620px;height:47px"></div>
<div class="v" style="left:540px;top:253px;height:47px"></div>
<div class="v" style="left:695px;top:253px;height:47px"></div>
<div class="v" style="left:849px;top:253px;height:47px"></div>
<div class="a" style="left:392px;top:267px;line-height:21px">A.</div>
<div class="a" style="left:418px;top:263px;line-height:21px">a.b</div>
<div class="a" style="left:547px;top:260px;line-height:21px">B.</div>
<div class="a" style="left:621px;top:252px;line-height:21px">(a + b).2</div>
<div class="a" style="left:702px;top:269px;line-height:21px">C.</div>
<div class="a" style="left:727.5px;top:261px;line-height:21px;word-spacing:-1.3px">(a + b) : 2</div>
<div class="a" style="left:856px;top:267px;line-height:21px">D.</div>
<div class="a" style="left:882px;top:263px;line-height:21px">a + b</div>
<!-- Cau 2 -->
<div class="a" style="left:385px;top:299.7px;line-height:21px;word-spacing:0.05px"><b>Câu 2.</b> Biểu thức nào sau đây là đơn thức:</div>
<div class="t" style="left:385px;top:322px;width:620px;height:36px"></div>
<div class="v" style="left:540px;top:322px;height:36px"></div>
<div class="v" style="left:695px;top:322px;height:36px"></div>
<div class="v" style="left:849px;top:322px;height:36px"></div>
<div class="a" style="left:392px;top:334px;line-height:21px">A.</div>
<div class="a" style="left:417px;top:325px;line-height:21px;word-spacing:-0.6px">(x + 1)<span style="font-size:23.5px;line-height:0">(</span>2 − x<span style="font-size:23.5px;line-height:0">)</span></div>
<div class="a" style="left:547px;top:336px;line-height:21px">B.</div>
<div class="a eq" style="left:571px;top:328px;line-height:21px">x<sup>2</sup>y</div>
<div class="a" style="left:702px;top:331.6px;line-height:21px">C.</div>
<div class="a" style="left:728px;top:324px;line-height:21px">6y − 2z</div>
<div class="a" style="left:856px;top:330px;line-height:21px">D.</div>
<div class="a" style="left:882px;top:327px;line-height:21px">2x + x</div>
<!-- Cau 3 -->
<div class="a" style="left:385px;top:357.6px;line-height:21px;word-spacing:0.7px"><b>Câu 3.</b> Đơn thức 5x<sup>6</sup>y<sup>3</sup>z<sup>2</sup> có bậc là</div>
<div class="t" style="left:385px;top:380px;width:620px;height:21px"></div>
<div class="v" style="left:540px;top:380px;height:21px"></div>
<div class="v" style="left:695px;top:380px;height:21px"></div>
<div class="v" style="left:849px;top:380px;height:21px"></div>
<div class="a" style="left:392px;top:378.7px;line-height:21px">A. 5</div>
<div class="a" style="left:547px;top:378.7px;line-height:21px">B.&nbsp; 6</div>
<div class="a" style="left:702px;top:378.7px;line-height:21px">C.&nbsp; 8</div>
<div class="a" style="left:856px;top:378.7px;line-height:21px">D.&nbsp; 11</div>
<!-- Cau 4 -->
<div class="a" style="left:385px;top:414.7px;line-height:21px;word-spacing:0.53px"><b>Câu 4.</b> Đơn thức nào đồng dạng với đơn thức</div>
<div class="a eq" style="left:730.5px;top:407px;line-height:21px">10x<sup>2</sup>y<sup>5</sup>z</div>
<div class="t" style="left:385px;top:437px;width:620px;height:36px"></div>
<div class="v" style="left:540px;top:437px;height:36px"></div>
<div class="v" style="left:695px;top:437px;height:36px"></div>
<div class="v" style="left:849px;top:437px;height:36px"></div>
<div class="a" style="left:392px;top:450.7px;line-height:21px">A.</div>
<div class="a eq" style="left:415px;top:442.7px;line-height:21px">10x<sup>2</sup>yz</div>
<div class="a" style="left:547px;top:450.7px;line-height:21px">B.</div>
<div class="a eq" style="left:569px;top:442.7px;line-height:21px">10x<sup>2</sup>y<sup>5</sup></div>
<div class="a" style="left:702px;top:444px;line-height:21px">C.</div>
<div class="a" style="left:727px;top:436px;line-height:21px">10xyz</div>
<div class="a" style="left:856px;top:450.8px;line-height:21px">D.</div>
<div class="a eq" style="left:881px;top:442.7px;line-height:21px">x<sup>2</sup>y<sup>5</sup>z</div>
<!-- Cau 5 -->
<div class="a" style="left:385px;top:472.7px;line-height:21px;word-spacing:0.33px"><b>Câu 5.</b> Đa thức nào sau đây là đa thức một biến</div>
<div class="t" style="left:385px;top:495px;width:620px;height:36px"></div>
<div class="v" style="left:540px;top:495px;height:36px"></div>
<div class="v" style="left:695px;top:495px;height:36px"></div>
<div class="v" style="left:849px;top:495px;height:36px"></div>
<div class="a" style="left:392px;top:500.9px;line-height:21px">A. 3x – 5x<sup>2</sup></div>
<div class="a" style="left:547px;top:500.9px;line-height:21px">B. x<sup>2</sup> – 2x + y</div>
<div class="a" style="left:702px;top:500.9px;line-height:21px">C. yz +16x</div>
<div class="a" style="left:856px;top:508.8px;line-height:21px">D.</div>
<div class="a eq" style="left:881px;top:500.9px;line-height:21px;word-spacing:-1.4px">zx<sup>3</sup> + 2y + 1</div>
<!-- Cau 6 -->
<div class="a" style="left:385px;top:530.8px;line-height:21px;word-spacing:0.24px"><b>Câu 6.</b> Hệ số cao nhất của đa thức B(x) = -10x<sup>6</sup> -9x<sup>3</sup> + x +15 là</div>
<div class="t" style="left:385px;top:553px;width:620px;height:21px"></div>
<div class="v" style="left:540px;top:553px;height:21px"></div>
<div class="v" style="left:695px;top:553px;height:21px"></div>
<div class="v" style="left:849px;top:553px;height:21px"></div>
<div class="a" style="left:392px;top:552px;line-height:21px">A. 1</div>
<div class="a" style="left:547px;top:552px;line-height:21px">B. 9</div>
<div class="a" style="left:702px;top:552px;line-height:21px">C. - 10</div>
<div class="a" style="left:856px;top:552px;line-height:21px">D. 15</div>
<!-- intro -->
<div class="a" style="left:385px;top:573.8px;width:577px;line-height:21px;white-space:normal;text-align:justify;text-align-last:justify">Dùng để làm câu <b>7, 8</b> : Điều tra số kilôgam giấy vụn thu được của các lớp ở</div>
<div class="a" style="left:385px;top:594.7px;line-height:21px;word-spacing:-0.15px">trường A được ghi lại bảng sau :</div>
<!-- data table -->
<div class="t" style="left:449px;top:617px;width:530px;height:45px;border-color:#000"></div>
<div class="h bk" style="left:449px;top:639px;width:530px"></div>
<div class="v bk" style="left:537px;top:617px;height:45px"></div>
<div class="v bk" style="left:625px;top:617px;height:45px"></div>
<div class="v bk" style="left:713px;top:617px;height:45px"></div>
<div class="v bk" style="left:801px;top:617px;height:45px"></div>
<div class="v bk" style="left:890px;top:617px;height:45px"></div>
<div class="a" style="left:485px;top:617px;line-height:21px">58</div>
<div class="a" style="left:544px;top:617px;line-height:21px">60</div>
<div class="a" style="left:632px;top:617px;line-height:21px">57</div>
<div class="a" style="left:720px;top:617px;line-height:21px">60</div>
<div class="a" style="left:808px;top:617px;line-height:21px">61</div>
<div class="a" style="left:897px;top:617px;line-height:21px">61</div>
<div class="a" style="left:485px;top:639px;line-height:21px">57</div>
<div class="a" style="left:544px;top:639px;line-height:21px">58</div>
<div class="a" style="left:632px;top:639px;line-height:21px">61</div>
<div class="a" style="left:720px;top:639px;line-height:21px">60</div>
<div class="a" style="left:808px;top:639px;line-height:21px">58</div>
<div class="a" style="left:897px;top:639px;line-height:21px">57</div>
<!-- Cau 7 -->
<div class="a" style="left:385px;top:662px;line-height:21px;word-spacing:-0.2px"><b>Câu 7.</b> Bảng trên được gọi là:</div>
<div class="t" style="left:385px;top:684px;width:620px;height:42px"></div>
<div class="h" style="left:385px;top:705px;width:620px"></div>
<div class="v" style="left:695px;top:684px;height:42px"></div>
<div class="a" style="left:392px;top:683px;line-height:21px">A. Bảng “tần số”</div>
<div class="a" style="left:702px;top:683px;line-height:21px">B. Bảng “phân phối thực nghiệm”</div>
<div class="a" style="left:392px;top:704px;line-height:21px">C. Bảng số liệu thống kê ban đầu</div>
<div class="a" style="left:702px;top:704px;line-height:21px">D. Bảng dấu hiệu.</div>
<div class="a" style="left:385px;top:726px;width:577px;line-height:21px;white-space:normal;text-align:justify;text-align-last:justify"><b>Câu 8.</b> Số lần xuất hiện của một giá trị trong dãy giá trị của một dấu hiệu gọi</div>
</div>
<div id="vscroll"></div>
<div class="a" style="left:1350px;top:235px;width:15px;height:143px;background:#cdcdcd"></div>
<svg class="a" style="left:1353px;top:201px" width="9" height="8" viewBox="0 0 9 8"><path d="M0.9 6.2l3.6-3.8 3.6 3.8" fill="none" stroke="#555" stroke-width="2"/></svg>
<svg class="a" style="left:1353px;top:729px" width="9" height="8" viewBox="0 0 9 8"><path d="M0.9 1.5l3.6 3.8 3.6-3.8" fill="none" stroke="#555" stroke-width="2"/></svg>

<div id="status"></div>
<div id="taskbar"></div><div class="a" style="left:818px;top:766px;width:36px;height:2px;background:#6b6b6b"></div>
<div class="a" style="left:1136px;top:743px;width:1px;height:23px;background:#d9d9d9"></div>
<div class="a" style="left:1167px;top:743px;width:1px;height:23px;background:#d9d9d9"></div>
<div class="a" style="left:1188.60px;top:748px;font-size:11.5px;line-height:15px;color:#1e1e1e;letter-spacing:-0.332px">100%</div>
<svg class="a" style="left:1223px;top:746px" width="18" height="18" viewBox="0 0 18 18"><circle cx="9" cy="9" r="7.5" fill="#f6f6f6" stroke="#555" stroke-width="1"/><rect x="5" y="8.2" width="8" height="1.8" fill="#444"/></svg>
<div class="a" style="left:1250px;top:752px;width:85px;height:4px;background:#e3e6e8;border:1px solid #d6d9dc"></div>
<svg class="a" style="left:1288px;top:745px" width="11" height="18" viewBox="0 0 11 18"><path d="M0 0h11v13l-5.5 5L0 13z" fill="#0a74da"/></svg>
<svg class="a" style="left:1345px;top:746px" width="18" height="18" viewBox="0 0 18 18"><circle cx="9" cy="9" r="7.5" fill="#f6f6f6" stroke="#555" stroke-width="1"/><rect x="5" y="8.2" width="8" height="1.8" fill="#444"/><rect x="8.1" y="5" width="1.8" height="8" fill="#444"/></svg>
<div class="a" style="left:1365px;top:743px;width:1px;height:23px;background:#d9d9d9"></div>

</body></html>
